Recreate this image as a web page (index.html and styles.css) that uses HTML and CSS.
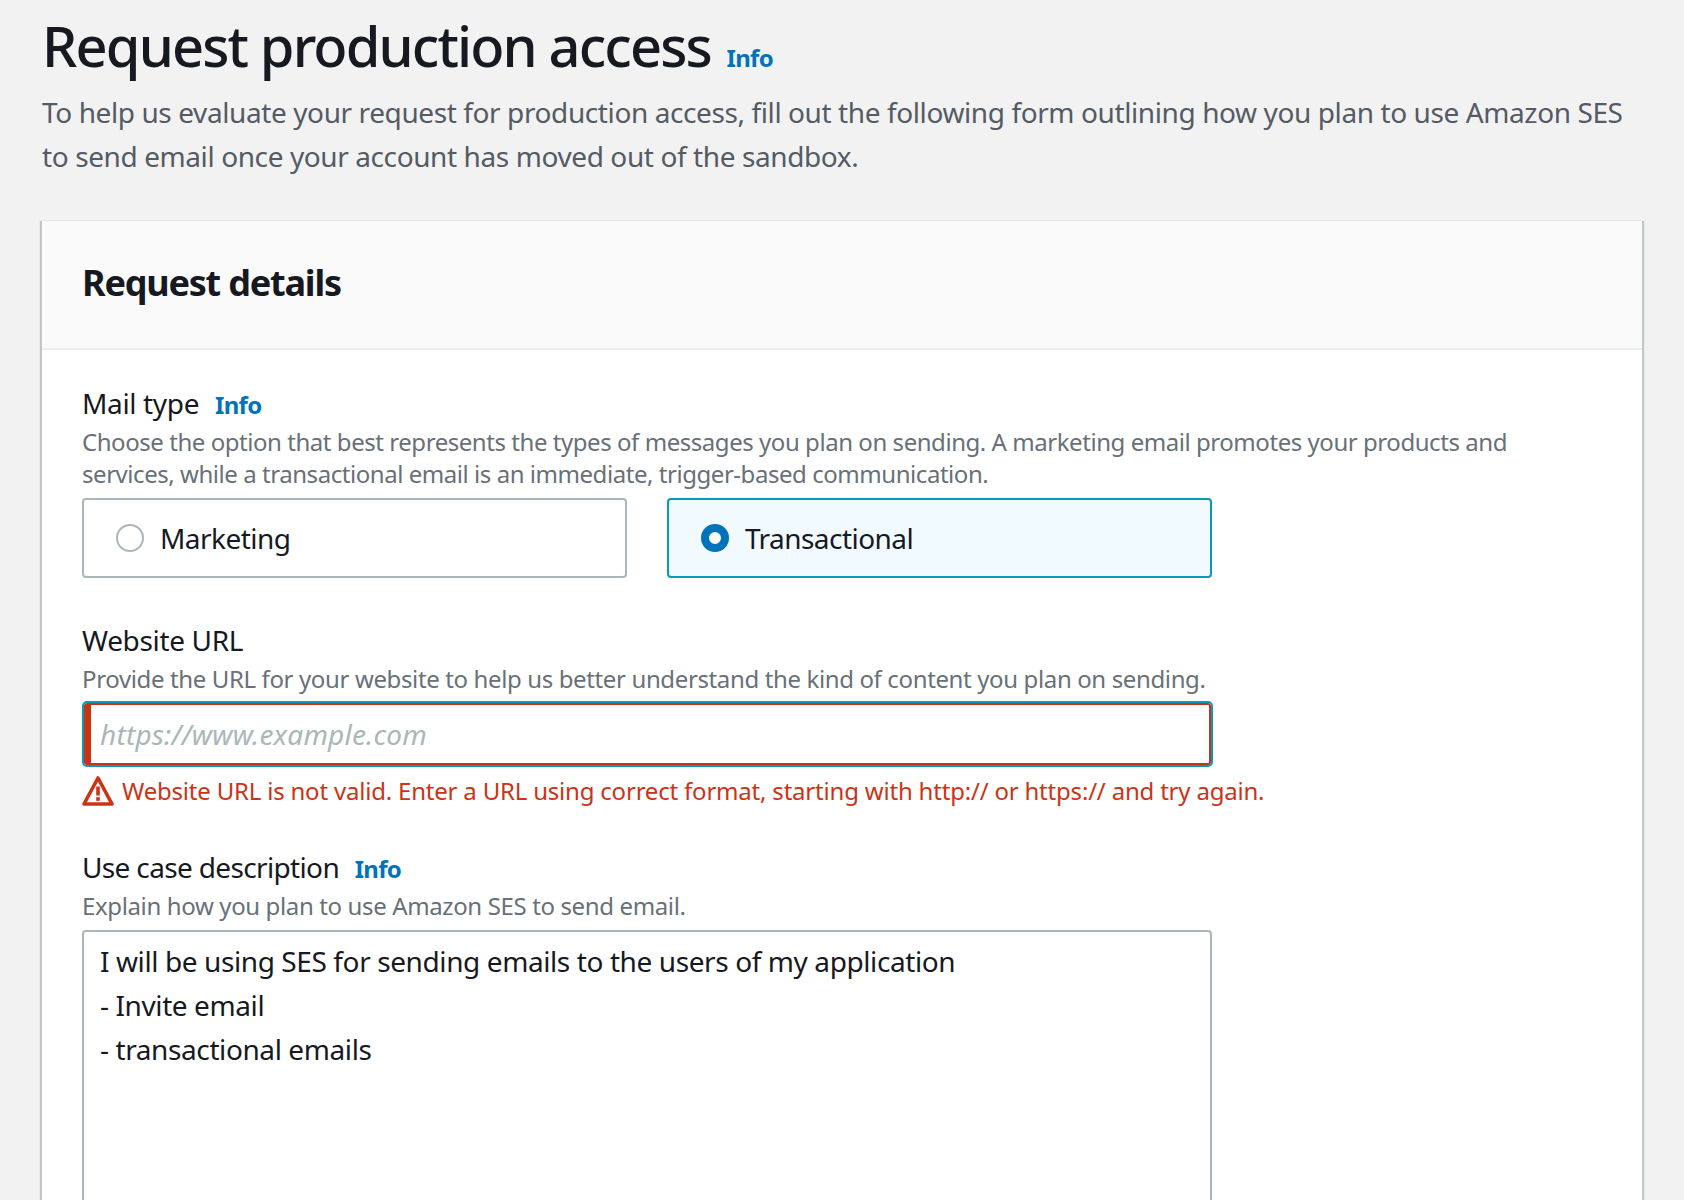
FILE: index.html
```html
<!DOCTYPE html>
<html lang="en">
<head>
<meta charset="utf-8">
<title>Request production access</title>
<link rel="stylesheet" href="styles.css">
</head>
<body>
<main class="page">
  <header class="page-head">
    <h1 class="title">Request production access <a class="info info-title" href="#">Info</a></h1>
    <p class="lead">To help us evaluate your request for production access, fill out the following form outlining how you plan to use Amazon SES to send email once your account has moved out of the sandbox.</p>
  </header>
  <section class="card">
    <div class="card-head"><h2 class="card-title">Request details</h2></div>
    <div class="card-body">
      <div class="field field-mail">
        <div class="label">Mail type <a class="info info-label" href="#">Info</a></div>
        <p class="hint hint-wide">Choose the option that best represents the types of messages you plan on sending. A marketing email promotes your products and services, while a transactional email is an immediate, trigger-based communication.</p>
        <div class="tiles">
          <label class="tile"><span class="radio"></span>Marketing</label>
          <label class="tile tile-on"><span class="radio radio-on"></span>Transactional</label>
        </div>
      </div>
      <div class="field field-url">
        <div class="label">Website URL</div>
        <p class="hint hint-url">Provide the URL for your website to help us better understand the kind of content you plan on sending.</p>
        <input class="input" type="text" placeholder="https://www.example.com">
        <div class="error">
          <svg class="error-icon" viewBox="0 0 32 32" aria-hidden="true">
            <path d="M16 3 L30 29 H2 Z" fill="#fff" stroke="#cc3314" stroke-width="3.6" stroke-linejoin="round"/>
            <rect x="14.2" y="11.5" width="3.6" height="9" fill="#cc3314"/>
            <rect x="14.2" y="22.2" width="3.6" height="3.6" fill="#cc3314"/>
          </svg>
          <span>Website URL is not valid. Enter a URL using correct format, starting with http:// or https:// and try again.</span>
        </div>
      </div>
      <div class="field field-use">
        <div class="label label-tight">Use case description <a class="info info-label" href="#">Info</a></div>
        <p class="hint">Explain how you plan to use Amazon SES to send email.</p>
        <textarea class="textarea">I will be using SES for sending emails to the users of my application
- Invite email
- transactional emails</textarea>
      </div>
    </div>
  </section>
</main>
</body>
</html>
```
FILE: styles.css
```css
* { box-sizing: border-box; }
html, body { margin: 0; height: 1200px; overflow: hidden; }
body {
  background: #f2f2f2;
  color: #16191f;
  font-family: "Noto Sans", "Open Sans", sans-serif;
}
.page { padding: 13px 42px 0 42px; height: 1200px; overflow: hidden; }
.title {
  margin: 0;
  font-size: 56px;
  line-height: 64px;
  font-weight: 500;
  letter-spacing: -1.87px;
}
.info { color: #0073bb; text-decoration: none; font-weight: 700; letter-spacing: -0.7px; }
.info-title { font-size: 24px; margin-left: 3px; }
.info-label { font-size: 24px; margin-left: 9px; }
.lead {
  margin: 0;
  color: #545b64;
  font-size: 28px;
  line-height: 44px;
  width: 1600px;
  letter-spacing: -0.4px;
}
.card {
  margin-top: 43px;
  width: 1600px;
  background: #fff;
  box-shadow: 2px 0 1px rgba(0, 28, 36, 0.2), -2px 0 1px rgba(0, 28, 36, 0.2);
}
.card-head {
  height: 129px;
  padding: 0 40px 4px;
  display: flex;
  align-items: center;
  background: #fafafa;
  border-bottom: 2px solid #eaeded;
}
.card-title { margin: 0; font-size: 36px; font-weight: 700; letter-spacing: -1.2px; }
.card-body { padding: 33px 40px 0; }
.label { font-size: 28px; line-height: 40px; letter-spacing: -0.35px; }
.label-tight { letter-spacing: -0.65px; }
.hint {
  margin: 1px 0 0;
  color: #687078;
  font-size: 24px;
  line-height: 32px;
  letter-spacing: -0.37px;
}
.hint-wide { max-width: 1440px; letter-spacing: -0.45px; }
.hint-url { margin-top: 3px; }
.tiles { display: flex; gap: 40px; margin-top: 8px; }
.tile {
  width: 545px;
  height: 80px;
  display: flex;
  align-items: center;
  padding-left: 32px;
  gap: 16px;
  font-size: 28px;
  letter-spacing: -0.55px;
  background: #fff;
  border: 2px solid #aab7b8;
  border-radius: 4px;
}
.tile-on { background: #f1faff; border-color: #0a9ab5; }
.radio {
  width: 28px;
  height: 28px;
  border-radius: 50%;
  border: 2px solid #aab7b8;
  background: #fff;
}
.radio-on { border: 8px solid #0073bb; }
.field-url { margin-top: 42px; }
.field-use { margin-top: 38px; }
.input {
  display: block;
  margin: 8px 0 0 2px;
  width: 1127px;
  height: 62px;
  padding: 0 9px;
  font: 28px "Noto Sans", sans-serif;
  letter-spacing: 0.2px;
  background: #fff;
  border: 2px solid #cc3314;
  border-left-width: 7px;
  border-radius: 3px;
  outline: 2px solid #0a9ab5;
  outline-offset: 0;
}
.input::placeholder { color: #aab7b8; font-style: italic; opacity: 1; }
.error {
  display: flex;
  align-items: center;
  gap: 8px;
  margin-top: 8px;
  color: #cc3314;
  font-size: 24px;
  line-height: 36px;
  letter-spacing: -0.2px;
}
.error-icon { width: 32px; height: 32px; flex: none; }
.textarea {
  display: block;
  margin-top: 8px;
  width: 1130px;
  height: 400px;
  padding: 7px 16px;
  font: 28px/44px "Noto Sans", sans-serif;
  letter-spacing: -0.4px;
  color: #16191f;
  border: 2px solid #aab7b8;
  border-radius: 4px;
  background: #fff;
  resize: none;
  outline: none;
}
```
